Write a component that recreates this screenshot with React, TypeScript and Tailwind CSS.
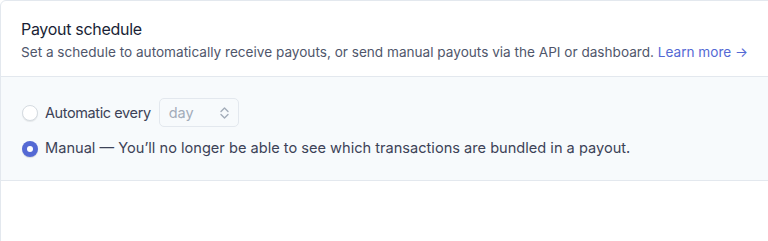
import React from 'react';

const font = { fontFamily: 'Inter, "Noto Sans", sans-serif' };

const App = () => {
  return (
    <div className="w-[768px] h-[241px] overflow-hidden bg-white" style={font}>
      <div className="w-[800px] h-[260px] rounded-md border border-[#e3e8ee] bg-white">
        <div className="px-5 pt-[16px] pb-[14px] border-b border-[#e3e8ee]">
          <h2 className="text-[16px] leading-6 font-normal tracking-[-0.3px] text-[#1a1f36]">Payout schedule</h2>
          <p className="text-[13.6px] leading-5 mt-[1px] text-[#4f566b]">
            Set a schedule to automatically receive payouts, or send manual payouts via the API or dashboard.{' '}
            <a className="text-[#5469d4]">Learn more →</a>
          </p>
        </div>
        <div className="bg-[#f7fafc] border-b border-[#e3e8ee] px-[21px] pt-[21px] pb-[20px] flex flex-col gap-[11px]">
          <label className="flex items-center gap-[7px] text-[14.5px] text-[#3c4257]">
            <span className="w-4 h-4 rounded-full bg-white border border-[#d5dbe1] shadow-[0_1px_1px_rgba(0,0,0,0.08)]" />
            <span className="tracking-[-0.4px]">Automatic every</span>
            <span className="ml-[1px] w-[80px] h-[29px] flex items-center justify-between pl-[9px] pr-[9px] rounded-[5px] border border-[#e3e8ee] text-[#a3acb9]">
              day
              <svg width="9" height="12" viewBox="0 0 9 12" fill="none" stroke="#a3acb9" strokeWidth="1.4" strokeLinecap="round" strokeLinejoin="round">
                <path d="M1 4.5 4.5 1 8 4.5" />
                <path d="M1 7.5 4.5 11 8 7.5" />
              </svg>
            </span>
          </label>
          <label className="flex items-center gap-[7px] text-[14.6px] text-[#3c4257]">
            <span className="w-4 h-4 rounded-full bg-[#5469d4] flex items-center justify-center shadow-[0_1px_1px_rgba(0,0,0,0.12)]">
              <span className="w-[6px] h-[6px] rounded-full bg-white" />
            </span>
            <span>Manual — You’ll no longer be able to see which transactions are bundled in a payout.</span>
          </label>
        </div>
      </div>
    </div>
  );
};

export default App;
